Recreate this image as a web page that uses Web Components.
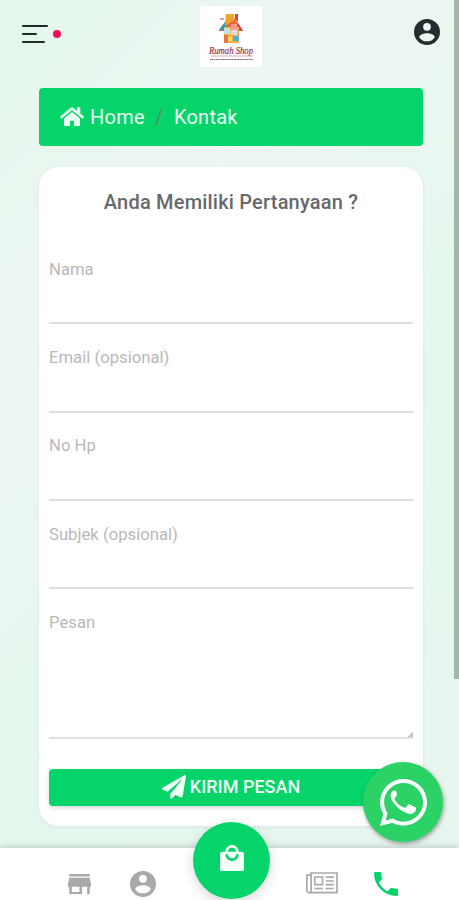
<!DOCTYPE html>
<html lang="id">
<head>
<meta charset="utf-8">
<meta name="viewport" content="width=device-width, initial-scale=1">
<title>Kontak</title>
<style>
  html, body { margin: 0; height: 100%; overflow: hidden; }
  body {
    --green: #04d46a;
    font-family: Roboto, "Liberation Sans", sans-serif;
    background: linear-gradient(135deg, #e3f7ec 0%, #edf6f1 28%, #e4f7ed 58%, #e8f5ee 100%);
  }
</style>
</head>
<body>
<shop-app>
  <shop-header slot="header"></shop-header>
  <bread-crumb current="Kontak">Home</bread-crumb>
  <contact-card>
    <span slot="title">Anda Memiliki Pertanyaan ?</span>
    <form-field label="Nama"></form-field>
    <form-field label="Email (opsional)"></form-field>
    <form-field label="No Hp"></form-field>
    <form-field label="Subjek (opsional)"></form-field>
    <form-field label="Pesan" multiline></form-field>
    <send-button>KIRIM PESAN</send-button>
  </contact-card>
  <bottom-nav slot="footer"></bottom-nav>
  <whatsapp-button slot="overlay"></whatsapp-button>
</shop-app>

<script>
const icons = {
  user: `<svg viewBox="2 2 20 20"><path fill="currentColor" fill-rule="evenodd" d="M12 2a10 10 0 1 0 0 20 10 10 0 0 0 0-20zm0 3a3 3 0 1 1 0 6 3 3 0 0 1 0-6zm0 14.2a7.2 7.2 0 0 1-6-3.22c.03-1.99 4-3.08 6-3.08s5.97 1.09 6 3.08a7.2 7.2 0 0 1-6 3.22z"/></svg>`,
  home: `<svg viewBox="0 0 576 512"><path fill="currentColor" d="M280.400 148.300 96 300.100V464a16 16 0 0 0 16 16l112-.3a16 16 0 0 0 16-16V368a16 16 0 0 1 16-16h64a16 16 0 0 1 16 16v95.600a16 16 0 0 0 16 16.100L464 480a16 16 0 0 0 16-16V300L295.700 148.300a12.200 12.200 0 0 0-15.300 0zM571.600 251.500 488 182.600V44a12 12 0 0 0-12-12h-56a12 12 0 0 0-12 12v72.600L318.500 43a48 48 0 0 0-61 0L4.300 251.500a12 12 0 0 0-1.600 16.900l25.500 31a12 12 0 0 0 16.900 1.600L280.400 107.200a12.200 12.200 0 0 1 15.300 0L531 301a12 12 0 0 0 16.900-1.600l25.500-31a12 12 0 0 0-1.800-16.900z"/></svg>`,
  plane: `<svg viewBox="0 0 512 512"><path fill="currentColor" d="M476 3.200 12.500 270.600c-18.100 10.400-15.800 35.600 2.200 43.200L121 358.400l287.300-253.200c5.500-4.900 13.300 2.600 8.600 8.300L176 407v80.500c0 23.600 28.500 32.900 42.500 15.800L282 426l124.600 52.200c14.200 6 30.400-2.900 33-18.200l72-432C515 7.800 493.300-6.800 476 3.200z"/></svg>`,
  store: `<svg viewBox="3 4 18 16"><path fill="currentColor" d="M20 4H4v2h16V4zm1 10v-2l-1-5H4l-1 5v2h1v6h10v-6h4v6h2v-6h1zm-9 4H6v-4h6v4z"/></svg>`,
  bag: `<svg viewBox="3 1 18 20"><path fill="currentColor" d="M19 6h-2a5 5 0 0 0-10 0H5a2 2 0 0 0-2 2v11a2 2 0 0 0 2 2h14a2 2 0 0 0 2-2V8a2 2 0 0 0-2-2zm-7-3a3 3 0 0 1 3 3H9a3 3 0 0 1 3-3zm0 10a5 5 0 0 1-5-5h2a3 3 0 0 0 6 0h2a5 5 0 0 1-5 5z"/></svg>`,
  news: `<svg viewBox="0 0 31 21" fill="none" stroke="currentColor" stroke-width="1.600"><path d="M5 1h25v19H3a2.200 2.200 0 0 1-2.200-2.200V3H5zM5 3v15a2 2 0 0 1-2 2"/><path d="M8.500 4.800h7.500v7.500H8.500zM19 5h8M19 8.700h8M19 12.300h8M8 16h8.500M19 16h8"/></svg>`,
  phone: `<svg viewBox="3 3 18 18"><path fill="currentColor" d="M6.620 10.790a15.150 15.150 0 0 0 6.590 6.590l2.200-2.200a1 1 0 0 1 1.020-.24c1.120.37 2.330.57 3.570.57a1 1 0 0 1 1 1V20a1 1 0 0 1-1 1A17 17 0 0 1 3 4a1 1 0 0 1 1-1h3.500a1 1 0 0 1 1 1c0 1.250.2 2.450.57 3.570a1 1 0 0 1-.25 1.020l-2.200 2.200z"/></svg>`,
  whatsapp: `<svg viewBox="0 0 448 448"><path fill="currentColor" d="M380.900 65.100C339 23.100 283.200 0 223.900 0 101.500 0 1.900 99.600 1.900 222c0 39.100 10.200 77.300 29.600 111L0 448l117.700-30.900c32.400 17.700 68.900 27 106.100 27h.1C346.200 444.100 448 344.500 448 222.100c0-59.300-25.200-115-67.100-157zm-157 341.600c-33.200 0-65.700-8.900-94-25.700l-6.700-4-69.800 18.300L72 327.200l-4.400-7c-18.500-29.400-28.200-63.300-28.200-98.200 0-101.700 82.800-184.500 184.600-184.500 49.300 0 95.600 19.200 130.400 54.100 34.800 34.900 56.200 81.200 56.100 130.500 0 101.800-84.900 184.600-186.600 184.600z"/><path fill="currentColor" d="M155 119c-5-10-10-10-17-10-10-1-17 3-22 9-13 15-17 29-14 50 5 27 19 50 40 74 34 39 75 72 121 87 31 11 61 0 76-23 5-10 6-19 5-27-1-6-6-8-12-12l-48-24c-8-4-14-2-19 5l-17 22c-5 6-10 6-17 3-40-16-70-42-91-78-4-7-2-12 3-17l15-18c4-6 4-10 1-17z"/></svg>`
};

class ShopApp extends HTMLElement {
  constructor() {
    super();
    this.attachShadow({ mode: "open" }).innerHTML = /* html */ `
      <style>
        :host { display: flex; flex-direction: column; height: 100vh; position: relative; overflow: hidden; }
        main { flex: 1; min-height: 0; padding: 0 36px 0 39px; }
        .thumb { position: absolute; top: 0; right: 0; width: 5px; height: 679px; background: #a4b5ac; }
      </style>
      <slot name="header"></slot>
      <main><slot></slot></main>
      <slot name="footer"></slot>
      <slot name="overlay"></slot>
      <div class="thumb"></div>
    `;
  }
}
customElements.define("shop-app", ShopApp);

class ShopHeader extends HTMLElement {
  constructor() {
    super();
    this.attachShadow({ mode: "open" }).innerHTML = /* html */ `
      <style>
        :host { display: grid; grid-template-columns: 1fr 62px 1fr; height: 82px; padding: 6px 19px 0 22px; box-sizing: border-box; }
        .menu { display: flex; align-items: center; gap: 5px; height: 56px; }
        .bars { display: flex; flex-direction: column; gap: 6px; width: 26px; }
        .bars i { height: 2px; border-radius: 1px; background: #202b27; }
        .bars i:nth-child(2) { width: 15px; }
        .bars i:nth-child(3) { width: 23px; }
        .dot { width: 8px; height: 8px; border-radius: 50%; background: #ee0b5c; }
        .logo { width: 62px; height: 61px; background: #fff; overflow: visible; }
        .user { justify-self: end; width: 26px; height: 26px; margin-top: 12.5px; color: #242e31; }
        svg { display: block; }
      </style>
      <div class="menu"><div class="bars"><i></i><i></i><i></i></div><span class="dot"></span></div>
      <svg class="logo" viewBox="0 0 62 61">
        <path d="M19 24 31 8l4 5 8 12H19z" fill="#e9683e"/>
        <path d="M19 24 26 15l1 9z" fill="#249cae"/>
        <path d="M26 8h8v6l-5 3-4 3z" fill="#efa62d"/>
        <path d="M35 8h3v8l-3-3z" fill="#d64130"/>
        <path d="m38 17 5 8h-7z" fill="#db3a35"/>
        <path d="M24 21h15v16H24z" fill="#f4b34a"/>
        <path d="M24 22h6v6h-6z" fill="#bfe1e5"/>
        <path d="M31 18h6v7h-6z" fill="#ef9b91"/>
        <path d="M31 24h6v5h-6z" fill="#e4dce8"/>
        <path d="M24 29h4v8h-4z" fill="#e3763d"/>
        <path d="M33 30h6v5h-6z" fill="#55aeca"/>
        <path d="M28 31h4v4h-4z" fill="#f7d967"/>
        <path d="M20 13h4" stroke="#e4a49b" stroke-width="2"/>
        <text x="9" y="48" textLength="44" lengthAdjust="spacingAndGlyphs" font-family="Liberation Serif" font-style="italic" font-size="10.500" fill="#9b2c40" stroke="#9b2c40" stroke-width=".2">Rumah Shop</text>
        <path d="M11 50h42" stroke="#c98790" stroke-width=".7"/>
        <path d="M10 53.500h43" stroke="#8a7a7f" stroke-width="1.200" stroke-dasharray="3 .5 2 .4"/>
      </svg>
      <div class="user">${icons.user}</div>
    `;
  }
}
customElements.define("shop-header", ShopHeader);

class BreadCrumb extends HTMLElement {
  constructor() {
    super();
    this.attachShadow({ mode: "open" });
  }

  connectedCallback() {
    this.shadowRoot.innerHTML = /* html */ `
      <style>
        :host { display: flex; align-items: center; height: 58px; margin-top: 6px; padding-left: 21px; border-radius: 4px; background: var(--green); color: #e9fff3; font-size: 20px; letter-spacing: .25px; }
        svg { display: block; width: 24px; margin-right: 6px; }
        .sep { margin: 0 10.5px; color: #4f9273; font-weight: 500; }
      </style>
      ${icons.home}<span><slot></slot></span><span class="sep">/</span><span>${this.getAttribute("current")}</span>
    `;
  }
}
customElements.define("bread-crumb", BreadCrumb);

class ContactCard extends HTMLElement {
  constructor() {
    super();
    this.attachShadow({ mode: "open" }).innerHTML = /* html */ `
      <style>
        :host { display: block; box-sizing: border-box; height: 659px; margin-top: 21px; padding: 23px 10px 0; border-radius: 20px; background: #fff; box-shadow: 0 1px 4px rgba(0, 0, 0, .06); }
        h1 { margin: 0 0 31px; font-size: 20px; line-height: 24px; font-weight: 500; letter-spacing: .2px; text-align: center; color: #66686c; }
      </style>
      <h1><slot name="title"></slot></h1>
      <slot></slot>
    `;
  }
}
customElements.define("contact-card", ContactCard);

class FormField extends HTMLElement {
  constructor() {
    super();
    this.attachShadow({ mode: "open" });
  }

  connectedCallback() {
    const multiline = this.hasAttribute("multiline");
    this.shadowRoot.innerHTML = /* html */ `
      <style>
        :host { display: block; height: 88.3px; }
        :host([multiline]) { height: 151px; }
        label { display: flex; flex-direction: column; box-sizing: border-box; padding-top: 12.8px; font-size: 16.7px; line-height: 24px; color: #b9b9b9; }
        input, textarea { display: block; box-sizing: border-box; width: 100%; height: 42.7px; margin: 0; padding: 0; border: 0; border-bottom: 2px solid #dfdfdf; border-radius: 0; background: none; font: inherit; outline: 0; }
        textarea { height: 104.2px; resize: vertical; }
        textarea::-webkit-resizer { background: linear-gradient(135deg, transparent 82%, #c4c4c4 82%); }
      </style>
      <label>${this.getAttribute("label")}${multiline ? "<textarea></textarea>" : "<input>"}</label>
    `;
  }
}
customElements.define("form-field", FormField);

class SendButton extends HTMLElement {
  constructor() {
    super();
    this.attachShadow({ mode: "open" }).innerHTML = /* html */ `
      <style>
        :host { display: block; margin-top: 19.500px; }
        button { display: flex; align-items: center; justify-content: center; gap: 4px; width: 100%; height: 37px; padding: 0 0 1px; border: 0; border-radius: 4px; background: var(--green); box-shadow: 0 2px 5px rgba(0, 0, 0, .16); color: #effff6; font: 500 18px Roboto, sans-serif; }
        svg { display: block; width: 24px; }
        span { margin-top: -1px; }
      </style>
      <button>${icons.plane}<span><slot></slot></span></button>
    `;
  }
}
customElements.define("send-button", SendButton);

class BottomNav extends HTMLElement {
  constructor() {
    super();
    this.attachShadow({ mode: "open" }).innerHTML = /* html */ `
      <style>
        :host { display: grid; grid-template-columns: 64px 64px 113px 2px 64px 64px; justify-items: center; height: 52px; padding-left: 47px; background: #fff; box-shadow: 0 -1px 7px rgba(0, 0, 0, .18); color: #a9a9a9; }
        a { display: block; margin-top: 23px; }
        svg { display: block; width: 100%; }
        .store { width: 23px; margin-top: 26px; }
        .user { width: 26px; }
        .news { width: 32px; margin-top: 24px; }
        .phone { width: 24px; margin-top: 24px; color: var(--green); }
        .bag { display: grid; place-items: center; width: 77px; height: 77px; margin-top: -26px; border-radius: 50%; background: var(--green); box-shadow: 0 4px 12px rgba(0, 0, 0, .16); color: #f5fffa; }
        .bag svg { width: 24px; margin-top: -5px; }
      </style>
      <a class="store">${icons.store}</a>
      <a class="user">${icons.user}</a>
      <a class="bag">${icons.bag}</a>
      <i></i>
      <a class="news">${icons.news}</a>
      <a class="phone">${icons.phone}</a>
    `;
  }
}
customElements.define("bottom-nav", BottomNav);

class WhatsappButton extends HTMLElement {
  constructor() {
    super();
    this.attachShadow({ mode: "open" }).innerHTML = /* html */ `
      <style>
        :host { position: absolute; right: 16px; bottom: 58px; display: grid; place-items: center; width: 80px; height: 80px; border-radius: 50%; background: #2bd366; box-shadow: 1px 2px 4px rgba(0, 0, 0, .35); color: #fff; }
        svg { display: block; width: 47px; }
      </style>
      ${icons.whatsapp}
    `;
  }
}
customElements.define("whatsapp-button", WhatsappButton);
</script>
</body>
</html>
